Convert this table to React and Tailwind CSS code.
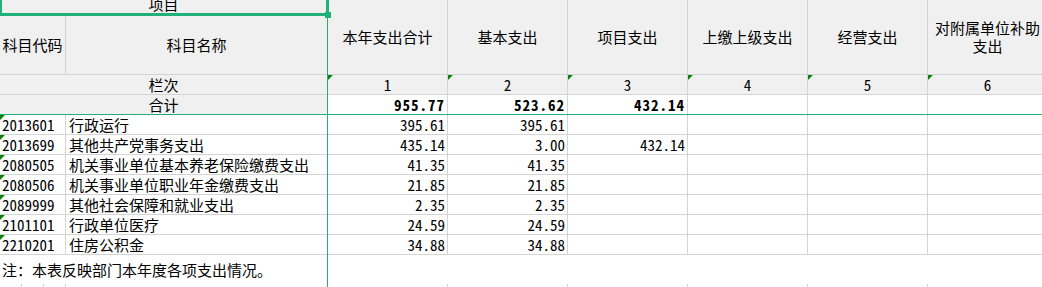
import React from "react";

const rows = [
  ["2013601", "行政运行", "395.61", "395.61", ""],
  ["2013699", "其他共产党事务支出", "435.14", "3.00", "432.14"],
  ["2080505", "机关事业单位基本养老保险缴费支出", "41.35", "41.35", ""],
  ["2080506", "机关事业单位职业年金缴费支出", "21.85", "21.85", ""],
  ["2089999", "其他社会保障和就业支出", "2.35", "2.35", ""],
  ["2101101", "行政单位医疗", "24.59", "24.59", ""],
  ["2210201", "住房公积金", "34.88", "34.88", ""],
];

const heads = ["本年支出合计", "基本支出", "项目支出", "上缴上级支出", "经营支出"];

function Tri() {
  return (
    <span className="absolute left-0 top-0 w-0 h-0 border-t-[5px] border-r-[5px] border-t-[#0a800a] border-r-transparent" />
  );
}

function Num({ children, bold }) {
  return (
    <div className="relative border-r border-b border-[#d4d4d4] flex items-center justify-end pr-[2px] overflow-hidden bg-white">
      {bold ? (
        <span className="font-bold tracking-[1px] [font-feature-settings:'hwid']">{children}</span>
      ) : (
        <span className="[font-feature-settings:'hwid']">{children}</span>
      )}
    </div>
  );
}

export default function App() {
  return (
    <div className="relative w-[1042px] h-[287px] overflow-hidden bg-white text-black text-[15px] leading-[18px] font-['Noto_Sans_CJK_SC','Noto_Sans',sans-serif]">
      <div className="grid w-[1048px] grid-cols-[66px_262px_repeat(6,120px)] grid-rows-[15px_60px_20px_20px_repeat(7,20px)_29px_20px]">
        {/* Row 1 */}
        <div className="col-span-2 bg-[#f0f0f0] border-r border-b border-[#d4d4d4] flex justify-center items-start overflow-hidden">
          <span className="-mt-[4px] leading-[15px]">项目</span>
        </div>
        {heads.map((h) => (
          <div
            key={h}
            className="row-span-2 bg-[#f0f0f0] border-r border-b border-[#d4d4d4] flex items-center justify-center"
          >
            {h}
          </div>
        ))}
        <div className="row-span-2 bg-[#f0f0f0] border-r border-b border-[#d4d4d4] flex items-center justify-center text-center px-[4px]">
          <span>
            对附属单位补助
            <br />
            支出
          </span>
        </div>
        {/* Row 2 */}
        <div className="bg-[#f0f0f0] border-r border-b border-[#d4d4d4] flex items-center justify-center">
          科目代码
        </div>
        <div className="bg-[#f0f0f0] border-r border-b border-[#d4d4d4] flex items-center justify-center">
          科目名称
        </div>
        {/* Row 3 栏次 */}
        <div className="col-span-2 bg-[#f0f0f0] border-r border-b border-[#d4d4d4] flex items-center justify-center">
          栏次
        </div>
        {["1", "2", "3", "4", "5", "6"].map((n) => (
          <div
            key={n}
            className="relative bg-[#f0f0f0] border-r border-b border-[#d4d4d4] flex items-center justify-center"
          >
            <Tri />
            <span className="pt-[1px] [font-feature-settings:'hwid']">{n}</span>
          </div>
        ))}
        {/* Row 4 合计 */}
        <div className="col-span-2 bg-[#f0f0f0] border-r border-b border-[#d4d4d4] flex items-center justify-center">
          合计
        </div>
        <Num bold>955.77</Num>
        <Num bold>523.62</Num>
        <Num bold>432.14</Num>
        <Num />
        <Num />
        <Num />
        {/* Data rows */}
        {rows.map((r) => (
          <React.Fragment key={r[0]}>
            <div className="relative border-r border-b border-[#d4d4d4] flex items-center pl-[2px]">
              <Tri />
              <span className="[font-feature-settings:'hwid']">{r[0]}</span>
            </div>
            <div className="border-r border-b border-[#d4d4d4] flex items-center pl-[3px] whitespace-nowrap overflow-hidden">
              {r[1]}
            </div>
            <Num>{r[2]}</Num>
            <Num>{r[3]}</Num>
            <Num>{r[4]}</Num>
            <Num />
            <Num />
            <Num />
          </React.Fragment>
        ))}
        {/* Note row */}
        <div className="col-span-8 flex items-end pl-[2px] pb-[5px]">
          注：本表反映部门本年度各项支出情况。
        </div>
        {/* Partial next row */}
        <div className="flex">
          <div className="w-[22px] border-r border-[#d4d4d4]" />
          <div className="w-[22px] border-r border-[#d4d4d4]" />
          <div className="flex-1 border-r border-[#d4d4d4]" />
        </div>
        <div className="border-r border-[#d4d4d4]" />
        <div className="border-r border-[#d4d4d4]" />
        <div className="border-r border-[#d4d4d4]" />
        <div className="border-r border-[#d4d4d4]" />
        <div className="border-r border-[#d4d4d4]" />
        <div className="border-r border-[#d4d4d4]" />
        <div className="border-r border-[#d4d4d4]" />
      </div>

      {/* Freeze pane lines */}
      <div className="absolute left-[327px] top-[14px] bottom-0 w-px bg-[#22b07a]" />
      <div className="absolute left-0 top-[114px] w-[1042px] h-px bg-[#22b07a]" />

      {/* Selection border around 项目 */}
      <div className="absolute left-0 top-0 w-[2px] h-[16px] bg-[#22b07a]" />
      <div className="absolute left-0 top-[13px] w-[328px] h-[3px] bg-[#22b07a]" />
      <div className="absolute left-[326px] top-0 w-[3px] h-[16px] bg-[#22b07a]" />
      <div className="absolute left-[325px] top-[12px] w-[6px] h-[6px] bg-[#22b07a]" />
    </div>
  );
}
